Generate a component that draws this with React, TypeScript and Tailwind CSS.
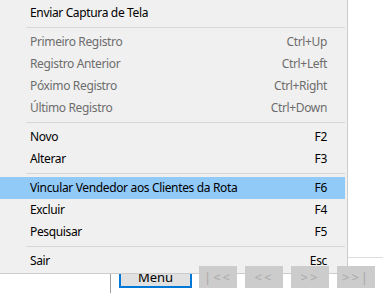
import React from "react";

type Item =
  | { sep: true }
  | { sep?: false; label: string; key?: string; disabled?: boolean; active?: boolean };

const items: Item[] = [
  { label: "Enviar Captura de Tela" },
  { sep: true },
  { label: "Primeiro Registro", key: "Ctrl+Up", disabled: true },
  { label: "Registro Anterior", key: "Ctrl+Left", disabled: true },
  { label: "Póximo Registro", key: "Ctrl+Right", disabled: true },
  { label: "Último Registro", key: "Ctrl+Down", disabled: true },
  { sep: true },
  { label: "Novo", key: "F2" },
  { label: "Alterar", key: "F3" },
  { sep: true },
  { label: "Vincular Vendedor aos Clientes da Rota", key: "F6", active: true },
  { label: "Excluir", key: "F4" },
  { label: "Pesquisar", key: "F5" },
  { sep: true },
  { label: "Sair", key: "Esc" },
];

const navButtons = ["|<<", "<<", ">>", ">>|"];

export default function App() {
  return (
    <div className="relative w-[383px] h-[293px] overflow-hidden bg-white font-['Noto_Sans',sans-serif] text-[12px] tracking-[-0.35px]">
      {/* form underneath */}
      <div className="flex flex-col h-full">
        <div className="flex-1" />
        <div className="h-[36px] border-t border-[#dcdcdc] flex">
          <div className="w-[111px] border-r border-[#a0a0a0]" />
          <div className="flex items-start pt-[8px] pl-[8px] gap-[7px]">
            <button className="w-[73px] h-[22px] bg-[#e1e1e1] border-2 border-[#0078d7] text-black text-[13px] leading-[18px] tracking-normal">
              Menu
            </button>
            <div className="relative z-10 flex gap-[8px]">
              {navButtons.map((b) => (
                <button
                  key={b}
                  className="w-[38px] h-[22px] bg-[#cccccc] text-[#a8a8a8] text-[13px] leading-[22px] tracking-[2px]"
                >
                  {b}
                </button>
              ))}
            </div>
          </div>
        </div>
      </div>

      {/* popup menu */}
      <div className="absolute top-0 left-0 w-[348px] h-[274px] bg-[#f0f0f0] border-r border-b border-[#cccccc] pt-[2px] pr-[2px]">
        {items.map((it, i) =>
          it.sep ? (
            <div key={i} className="h-[7px] pl-[26px] flex items-center">
              <div className="h-px w-full bg-[#d7d7d7]" />
            </div>
          ) : (
            <div
              key={i}
              className={`h-[22px] leading-[22px] flex justify-between pl-[30px] pr-[18px] ${
                it.active ? "bg-[#91c9f7]" : ""
              } ${it.disabled ? "text-[#6d6d6d]" : "text-black"}`}
            >
              <span>{it.label}</span>
              <span>{it.key}</span>
            </div>
          )
        )}
      </div>
    </div>
  );
}
